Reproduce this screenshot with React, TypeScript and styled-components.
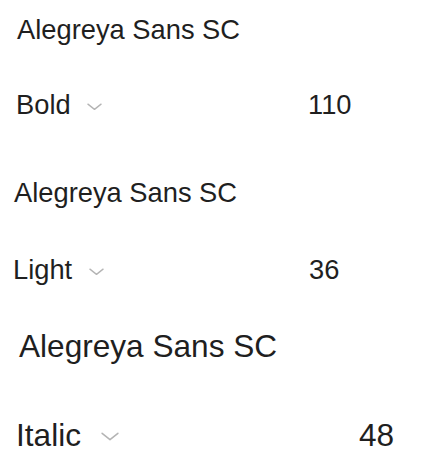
import styled, { createGlobalStyle } from "styled-components";

const GlobalStyle = createGlobalStyle`
    html, body {
        margin: 0;
        padding: 0;
        background: #ffffff;
    }
    body {
        font-family: "Liberation Sans", Arial, sans-serif;
        color: #1f1f1f;
    }
`;

const Page = styled.div`
    display: flex;
    flex-direction: column;
    width: 448px;
    height: 467px;
    overflow: hidden;
`;

const Card = styled.section<{ $size: number; $top: number }>`
    display: flex;
    flex-direction: column;
    font-size: ${p => p.$size}px;
    margin-top: ${p => p.$top}px;
`;

const Title = styled.div<{ $indent: number; $line: number }>`
    padding-left: ${p => p.$indent}px;
    line-height: ${p => p.$line}px;
    height: ${p => p.$line}px;
    white-space: nowrap;
`;

const Controls = styled.div<{ $indent: number; $line: number; $gap: number; $valueAt: number }>`
    display: grid;
    grid-template-columns: ${p => p.$valueAt - p.$indent}px auto;
    align-items: center;
    padding-left: ${p => p.$indent}px;
    margin-top: ${p => p.$gap}px;
    line-height: ${p => p.$line}px;
    height: ${p => p.$line}px;
`;

const StyleSelect = styled.div<{ $chevronGap: number }>`
    display: flex;
    align-items: center;
    gap: ${p => p.$chevronGap}px;
    cursor: pointer;
`;

const Chevron = styled.svg`
    display: block;
    flex: none;
    margin-top: 3px;
`;

const SizeValue = styled.div`
    white-space: nowrap;
`;

type FontRow = {
    family: string;
    style: string;
    size: number;
    fontSize: number;
    line: number;
    top: number;
    titleIndent: number;
    rowIndent: number;
    gap: number;
    valueAt: number;
    chevron: number;
    chevronGap: number;
};

const rows: FontRow[] = [
    { family: "Alegreya Sans SC", style: "Bold", size: 110, fontSize: 27.3, line: 36, top: 12, titleIndent: 17, rowIndent: 16, gap: 39, valueAt: 308, chevron: 15, chevronGap: 16 },
    { family: "Alegreya Sans SC", style: "Light", size: 36, fontSize: 27.3, line: 36, top: 52, titleIndent: 14, rowIndent: 13, gap: 41, valueAt: 309, chevron: 15, chevronGap: 17 },
    { family: "Alegreya Sans SC", style: "Italic", size: 48, fontSize: 31.6, line: 42, top: 37, titleIndent: 19, rowIndent: 16, gap: 47, valueAt: 359, chevron: 18, chevronGap: 20 },
];

const ChevronDown = ({ width }: { width: number }) => (
    <Chevron width={width} height={width / 2} viewBox="0 0 16 8" fill="none">
        <path d="M1 1.2 L8 6.8 L15 1.2" stroke="#b4b4b4" strokeWidth={1.4} strokeLinecap="round" strokeLinejoin="round" />
    </Chevron>
);

const App = () => {
    return (
        <>
            <GlobalStyle />
            <Page>
                {rows.map((r, i) => (
                    <Card key={i} $size={r.fontSize} $top={r.top}>
                        <Title $indent={r.titleIndent} $line={r.line}>{r.family}</Title>
                        <Controls $indent={r.rowIndent} $line={r.line} $gap={r.gap} $valueAt={r.valueAt}>
                            <StyleSelect $chevronGap={r.chevronGap}>
                                <span>{r.style}</span>
                                <ChevronDown width={r.chevron} />
                            </StyleSelect>
                            <SizeValue>{r.size}</SizeValue>
                        </Controls>
                    </Card>
                ))}
            </Page>
        </>
    );
};

export default App;
